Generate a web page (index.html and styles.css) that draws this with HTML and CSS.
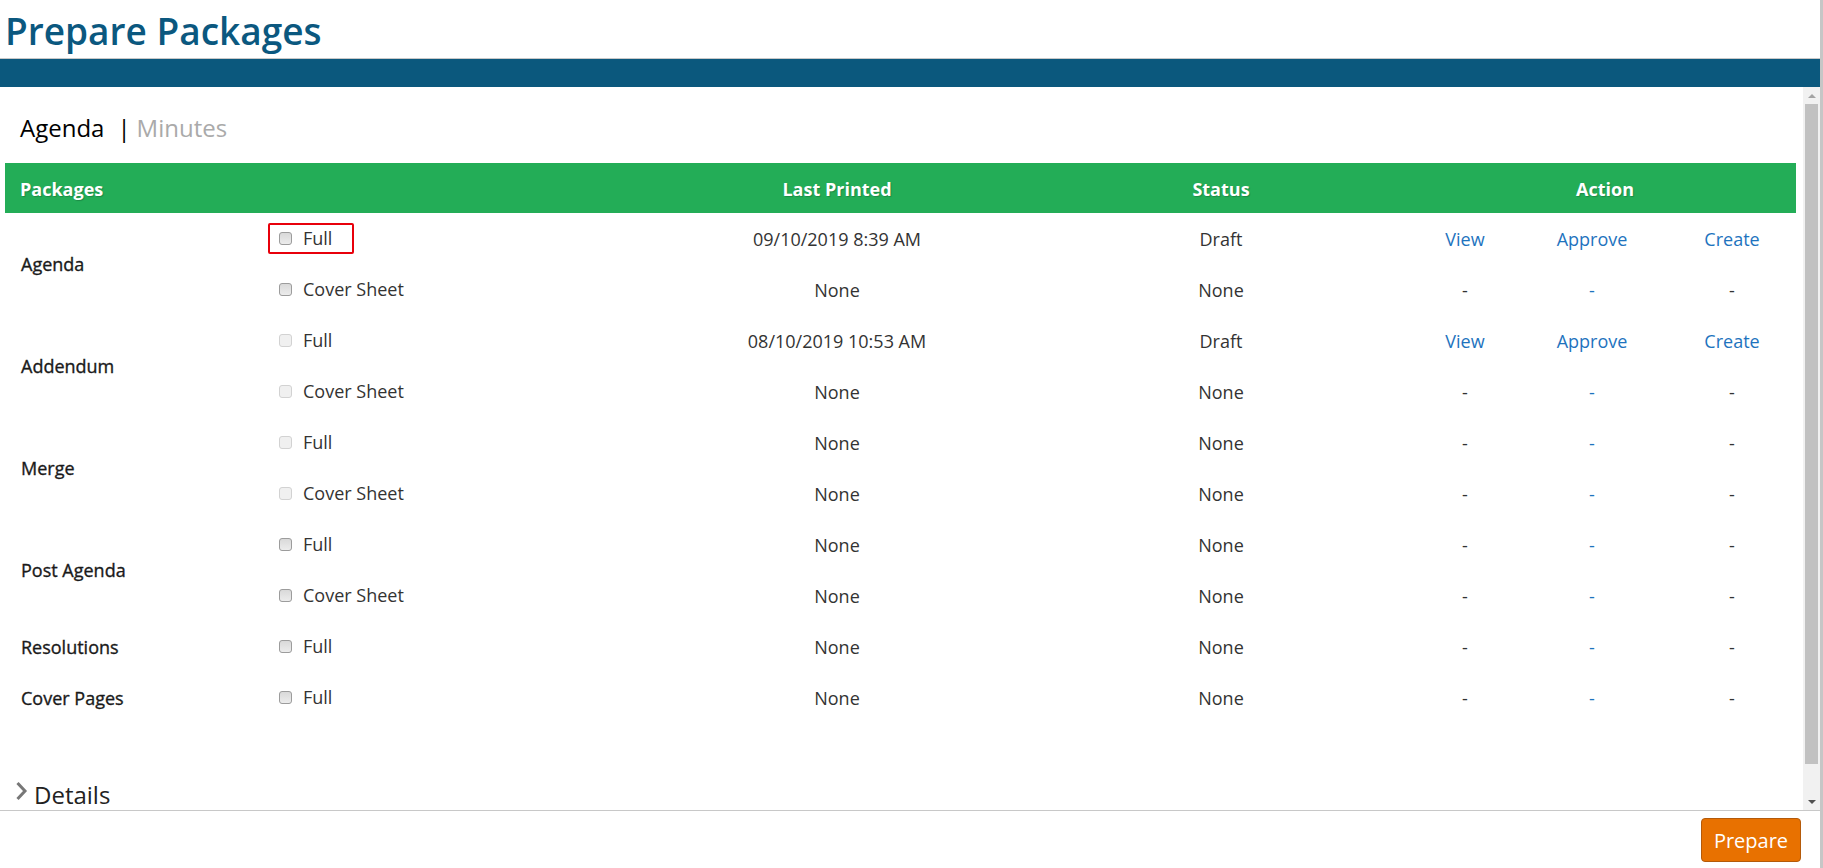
FILE: index.html
```html
<!DOCTYPE html>
<html lang="en">
<head>
    <meta charset="UTF-8">
    <meta name="viewport" content="width=device-width, initial-scale=1.0">
    <title>Prepare Packages</title>
    <link rel="stylesheet" href="styles.css">
</head>
<body>
    <div class="page-head">
        <h1 class="page-title">Prepare Packages</h1>
    </div>
    <div class="band"></div>

    <div class="frame">
        <div class="content">
            <div class="tabs">
                <span class="tab tab-active">Agenda</span>
                <span class="tab-sep">|</span>
                <span class="tab">Minutes</span>
            </div>

            <table class="packages">
                <colgroup>
                    <col class="col-name">
                    <col class="col-type">
                    <col class="col-printed">
                    <col class="col-status">
                    <col class="col-view">
                    <col class="col-approve">
                    <col class="col-create">
                </colgroup>
                <thead>
                    <tr class="head-row">
                        <th class="head-left" colspan="2">Packages</th>
                        <th>Last Printed</th>
                        <th>Status</th>
                        <th colspan="3">Action</th>
                    </tr>
                </thead>
                <tbody>
                    <tr class="row">
                        <td class="pkg-name" rowspan="2">Agenda</td>
                        <td class="pkg-type"><label class="pick pick-selected"><input type="checkbox" class="box">Full</label></td>
                        <td>09/10/2019 8:39 AM</td>
                        <td>Draft</td>
                        <td><a class="link" href="#">View</a></td>
                        <td><a class="link" href="#">Approve</a></td>
                        <td><a class="link" href="#">Create</a></td>
                    </tr>
                    <tr class="row">
                        <td class="pkg-type"><label class="pick"><input type="checkbox" class="box">Cover Sheet</label></td>
                        <td>None</td>
                        <td>None</td>
                        <td>-</td>
                        <td class="link">-</td>
                        <td>-</td>
                    </tr>
                    <tr class="row">
                        <td class="pkg-name" rowspan="2">Addendum</td>
                        <td class="pkg-type"><label class="pick"><input type="checkbox" class="box" disabled>Full</label></td>
                        <td>08/10/2019 10:53 AM</td>
                        <td>Draft</td>
                        <td><a class="link" href="#">View</a></td>
                        <td><a class="link" href="#">Approve</a></td>
                        <td><a class="link" href="#">Create</a></td>
                    </tr>
                    <tr class="row">
                        <td class="pkg-type"><label class="pick"><input type="checkbox" class="box" disabled>Cover Sheet</label></td>
                        <td>None</td>
                        <td>None</td>
                        <td>-</td>
                        <td class="link">-</td>
                        <td>-</td>
                    </tr>
                    <tr class="row">
                        <td class="pkg-name" rowspan="2">Merge</td>
                        <td class="pkg-type"><label class="pick"><input type="checkbox" class="box" disabled>Full</label></td>
                        <td>None</td>
                        <td>None</td>
                        <td>-</td>
                        <td class="link">-</td>
                        <td>-</td>
                    </tr>
                    <tr class="row">
                        <td class="pkg-type"><label class="pick"><input type="checkbox" class="box" disabled>Cover Sheet</label></td>
                        <td>None</td>
                        <td>None</td>
                        <td>-</td>
                        <td class="link">-</td>
                        <td>-</td>
                    </tr>
                    <tr class="row">
                        <td class="pkg-name" rowspan="2">Post Agenda</td>
                        <td class="pkg-type"><label class="pick"><input type="checkbox" class="box">Full</label></td>
                        <td>None</td>
                        <td>None</td>
                        <td>-</td>
                        <td class="link">-</td>
                        <td>-</td>
                    </tr>
                    <tr class="row">
                        <td class="pkg-type"><label class="pick"><input type="checkbox" class="box">Cover Sheet</label></td>
                        <td>None</td>
                        <td>None</td>
                        <td>-</td>
                        <td class="link">-</td>
                        <td>-</td>
                    </tr>
                    <tr class="row">
                        <td class="pkg-name">Resolutions</td>
                        <td class="pkg-type"><label class="pick"><input type="checkbox" class="box">Full</label></td>
                        <td>None</td>
                        <td>None</td>
                        <td>-</td>
                        <td class="link">-</td>
                        <td>-</td>
                    </tr>
                    <tr class="row">
                        <td class="pkg-name">Cover Pages</td>
                        <td class="pkg-type"><label class="pick"><input type="checkbox" class="box">Full</label></td>
                        <td>None</td>
                        <td>None</td>
                        <td>-</td>
                        <td class="link">-</td>
                        <td>-</td>
                    </tr>
                </tbody>
            </table>

            <div class="details">
                <svg class="chevron" width="13" height="20" viewBox="0 0 13 20">
                    <polyline points="2.5,2 10,10 2.5,18" fill="none" stroke="#777" stroke-width="3"/>
                </svg>
                <span>Details</span>
            </div>
        </div>

        <div class="scrollbar">
            <div class="scroll-btn"><span class="arrow-up"></span></div>
            <div class="scroll-thumb"></div>
            <div class="scroll-space"></div>
            <div class="scroll-btn"><span class="arrow-down"></span></div>
        </div>
    </div>

    <div class="page-foot">
        <button class="prepare-btn">Prepare</button>
    </div>
</body>
</html>
```

FILE: styles.css
```css
body{
    margin: 0;
    height: 100vh;
    box-sizing: border-box;
    border-right: 3px solid #c6c6c6;
    display: flex;
    flex-direction: column;
    overflow: hidden;
    background: white;
    font-family: "Open Sans", "Noto Sans", sans-serif;
    color: #333;
}
.page-head{
    height: 58px;
    border-bottom: 1px solid #c8c8c8;
}
.page-title{
    margin: 0;
    padding: 3px 0 0 5px;
    line-height: 55px;
    font-size: 37px;
    font-weight: 600;
    color: #0b587f;
}
.band{
    height: 28px;
    background-color: #0b587d;
}
.frame{
    flex: 1;
    min-height: 0;
    display: flex;
}
.content{
    flex: 1;
    overflow: hidden;
}
.tabs{
    padding: 25px 0 0 20px;
    line-height: 32px;
    font-size: 24px;
    display: flex;
}
.tab{
    color: #aaa;
}
.tab-active{
    color: black;
}
.tab-sep{
    color: black;
    margin: 0 6px 0 13px;
}
.packages{
    margin: 19px 7px 0 5px;
    width: 1791px;
    table-layout: fixed;
    border-collapse: collapse;
    font-size: 18px;
}
.col-name{ width: 260px; }
.col-type{ width: 381px; }
.col-printed{ width: 382px; }
.col-status{ width: 386px; }
.col-view{ width: 102px; }
.col-approve{ width: 152px; }
.col-create{ width: 128px; }
.head-row{
    height: 50px;
    background-color: #23ad57;
}
.head-row th{
    padding: 2px 0 0 0;
    color: white;
    font-weight: bold;
    text-align: center;
    text-shadow: 1px 1px 1px rgba(0, 0, 0, 0.2);
}
.head-row .head-left{
    text-align: left;
    padding-left: 15px;
}
.row{
    height: 51px;
}
.row td{
    padding: 0;
    text-align: center;
    vertical-align: middle;
}
.row .pkg-name{
    text-align: left;
    padding-left: 16px;
    color: #1a1a1a;
    -webkit-text-stroke: 0.35px #1a1a1a;
}
.row .pkg-type{
    text-align: left;
    padding-left: 3px;
}
.pick{
    display: inline-flex;
    align-items: center;
    gap: 11px;
    padding: 3px 20px 3px 9px;
    line-height: 21px;
    border: 2px solid transparent;
    border-radius: 2px;
}
.pick-selected{
    border-color: #e8000b;
}
.box{
    appearance: none;
    margin: 0;
    width: 13px;
    height: 13px;
    border: 1px solid #9c9c9c;
    border-radius: 3px;
    background: linear-gradient(#d9d9d9, #ececec);
}
.box:disabled{
    border-color: #d2d2d2;
    background: #f0f0f0;
}
.link{
    color: #1e73be;
    text-decoration: none;
}
.row td.link{
    color: #1e73be;
}
.details{
    margin-top: 56px;
    padding-left: 15px;
    display: flex;
    align-items: flex-start;
    font-size: 24px;
    line-height: 32px;
    color: #222;
}
.chevron{
    margin: 2px 6px 0 0;
}
.scrollbar{
    width: 17px;
    background-color: #f1f1f1;
    display: flex;
    flex-direction: column;
}
.scroll-btn{
    height: 17px;
    display: flex;
    align-items: center;
    justify-content: center;
}
.arrow-up{
    border-left: 4px solid transparent;
    border-right: 4px solid transparent;
    border-bottom: 4px solid #a3a3a3;
}
.arrow-down{
    border-left: 4px solid transparent;
    border-right: 4px solid transparent;
    border-top: 4px solid #505050;
}
.scroll-thumb{
    height: 660px;
    margin: 0 2px;
    background-color: #c1c1c1;
}
.scroll-space{
    flex: 1;
}
.page-foot{
    height: 58px;
    box-sizing: border-box;
    border-top: 1px solid #c8c8c8;
    display: flex;
    justify-content: flex-end;
    align-items: flex-start;
    padding: 7px 19px 0 0;
}
.prepare-btn{
    width: 100px;
    height: 44px;
    border: 1px solid #b45a0a;
    border-radius: 4px;
    background-color: #e87100;
    color: white;
    font-family: "Open Sans", "Noto Sans", sans-serif;
    font-size: 20px;
    padding: 0;
}
```
